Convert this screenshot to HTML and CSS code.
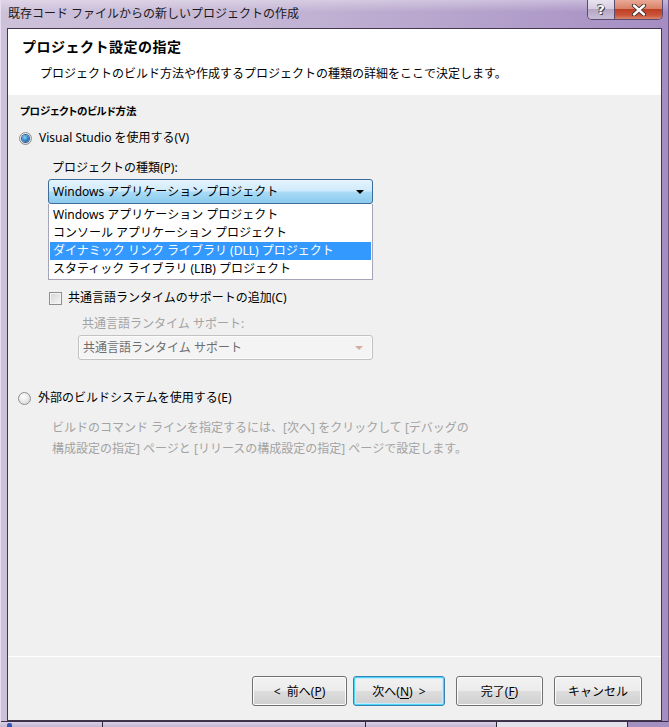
FILE: index.html
```html
<!DOCTYPE html>
<html lang="ja">
<head>
<meta charset="utf-8">
<title>既存コード ファイルからの新しいプロジェクトの作成</title>
<link rel="stylesheet" href="styles.css">
</head>
<body>
<div class="window">
  <div class="titlebar">
    <span class="title-text">既存コード ファイルからの新しいプロジェクトの作成</span>
    <div class="caption-btns">
      <span class="cap-btn cap-help">?</span>
      <span class="cap-btn cap-close">
        <svg width="16" height="12" viewBox="0 0 16 12"><path d="M3 1.5 L13 10.5 M13 1.5 L3 10.5" stroke="#3a2a2a" stroke-width="4.2" stroke-linecap="round"/><path d="M3 1.5 L13 10.5 M13 1.5 L3 10.5" stroke="#ffffff" stroke-width="2.4" stroke-linecap="round"/></svg>
      </span>
    </div>
  </div>

  <div class="client">
    <div class="header">
      <div class="header-title">プロジェクト設定の指定</div>
      <div class="header-sub">プロジェクトのビルド方法や作成するプロジェクトの種類の詳細をここで決定します。</div>
    </div>

    <div class="content">
      <div class="section-title">プロジェクトのビルド方法</div>

      <label class="radio-row first-radio">
        <span class="radio checked"><span class="dot"></span></span>
        <span>Visual Studio を使用する(V)</span>
      </label>

      <div class="indent">
        <div class="field-label">プロジェクトの種類(P):</div>
        <div class="combo-wrap">
          <div class="combo active">
            <span>Windows アプリケーション プロジェクト</span>
            <span class="arrow dark"></span>
          </div>
          <ul class="dropdown">
            <li>Windows アプリケーション プロジェクト</li>
            <li>コンソール アプリケーション プロジェクト</li>
            <li class="selected">ダイナミック リンク ライブラリ (DLL) プロジェクト</li>
            <li>スタティック ライブラリ (LIB) プロジェクト</li>
          </ul>
        </div>

        <label class="check-row">
          <span class="checkbox"></span>
          <span>共通言語ランタイムのサポートの追加(C)</span>
        </label>

        <div class="sub-indent">
          <div class="field-label disabled">共通言語ランタイム サポート:</div>
          <div class="combo off">
            <span>共通言語ランタイム サポート</span>
            <span class="arrow pale"></span>
          </div>
        </div>
      </div>

      <label class="radio-row second-radio">
        <span class="radio"></span>
        <span>外部のビルドシステムを使用する(E)</span>
      </label>

      <p class="desc">ビルドのコマンド ラインを指定するには、[次へ] をクリックして [デバッグの<br>構成設定の指定] ページと [リリースの構成設定の指定] ページで設定します。</p>
    </div>

    <div class="footer">
      <button class="btn w-back">&lt;&nbsp; 前へ(<u>P</u>)</button>
      <button class="btn w-next focused">次へ(<u>N</u>)&nbsp; &gt;</button>
      <button class="btn w-finish">完了(<u>F</u>)</button>
      <button class="btn w-cancel">キャンセル</button>
    </div>
  </div>
</div>
<div class="taskbar">
  <span class="task t1"><span class="task-icon"></span></span>
  <span class="task t2"></span>
  <span class="task t3"></span>
  <span class="task t4"></span>
  <span class="task t5"></span>
</div>
</body>
</html>
```
FILE: styles.css
```css
* { box-sizing: border-box; }

html, body {
  margin: 0;
  padding: 0;
  width: 669px;
  height: 727px;
  overflow: hidden;
  background: #c9bfd6;
  font-family: "Noto Sans", "Noto Sans CJK JP", sans-serif;
  font-size: 12px;
  color: #000;
}

/* window frame */
.window {
  height: 722px;
  display: flex;
  flex-direction: column;
  padding: 0 7px 1px 6px;
  background:
    linear-gradient(180deg, rgba(255,255,255,0.35) 0, rgba(255,255,255,0) 12px),
    linear-gradient(90deg, #cdc1da 0%, #c6b8d6 35%, #b6a3cc 70%, #a58dc3 100%);
  border-left: 1px solid #e6def0;
  box-shadow: inset -1px 0 0 #6b5886, inset 0 -1px 0 #3b2f48;
}

.titlebar {
  height: 28px;
  display: flex;
  align-items: flex-start;
  flex: none;
}

.title-text {
  margin-top: 6px;
  margin-left: 1px;
  line-height: 16px;
  color: #1a1a1a;
}

.caption-btns {
  margin-left: auto;
  display: flex;
  height: 20px;
  border: 1px solid #5c4b70;
  border-top: none;
  border-radius: 0 0 5px 5px;
  overflow: hidden;
  margin-right: -1px;
}

.cap-btn {
  height: 19px;
  display: flex;
  align-items: center;
  justify-content: center;
}

.cap-help {
  width: 27px;
  font-family: "DejaVu Sans", sans-serif;
  font-weight: bold;
  font-size: 13px;
  color: #fff;
  text-shadow: 0 0 1px #333, 1px 1px 0 #444, -1px -1px 0 #666;
  background: linear-gradient(180deg, #e9e3ef 0%, #d6cde0 45%, #b4a6c4 50%, #c9bed6 100%);
  border-right: 1px solid #5c4b70;
}

.cap-close {
  width: 47px;
  background: linear-gradient(180deg, #e9a996 0%, #d98269 45%, #bf3f22 50%, #c9553a 80%, #d9866c 100%);
}

/* client area */
.client {
  flex: 1;
  display: flex;
  flex-direction: column;
  background: #f0f0f0;
  border: 1px solid #42364f;
}

.header {
  height: 66px;
  background: #fff;
  padding: 9px 0 0 14px;
  flex: none;
}

.header-title {
  font-weight: bold;
  font-size: 14px;
  line-height: 18px;
  letter-spacing: 0.5px;
}

.header-sub {
  margin-top: 10px;
  margin-left: 18px;
  line-height: 16px;
}

.content {
  padding: 8px 0 0 12px;
  line-height: 16px;
}

.section-title {
  font-weight: bold;
  font-size: 10.5px;
  font-feature-settings: "palt";
  letter-spacing: -0.2px;
  height: 16px;
}

.radio-row,
.check-row {
  display: flex;
  align-items: center;
  gap: 7px;
  height: 16px;
}

.first-radio { margin-top: 11px; margin-left: -1px; }
.second-radio { margin-top: 30px; margin-left: -2px; }

.radio {
  width: 13px;
  height: 13px;
  border-radius: 50%;
  border: 1px solid #8e8f8f;
  background: radial-gradient(circle at 40% 35%, #ffffff 0%, #e6e6e6 55%, #cfcfcf 100%);
  display: flex;
  align-items: center;
  justify-content: center;
  flex: none;
}

.radio .dot {
  width: 7px;
  height: 7px;
  border-radius: 50%;
  background: radial-gradient(circle at 40% 35%, #8ed0f6 0%, #2c7fc7 55%, #0f4d8f 100%);
  box-shadow: 0 0 0 1px #36618f;
}

.indent { padding-left: 28px; }

.field-label {
  margin-top: 14px;
  height: 16px;
  margin-left: 4px;
}

.field-label.disabled {
  color: #a3a3a3;
  margin-top: 10px;
}

.combo-wrap { position: relative; }

.combo {
  width: 325px;
  height: 25px;
  margin-top: 3px;
  border-radius: 3px;
  display: flex;
  align-items: center;
  padding: 0 8px 0 4px;
}

.combo.active {
  border: 1px solid #3c6d98;
  background: linear-gradient(180deg, #e5f4fc 0%, #cfeafb 48%, #a9dbf6 52%, #8ccaee 100%);
}

.combo.off {
  width: 295px;
  margin-top: 3px;
  border: 1px solid #c2c2c2;
  background: #f4f4f4;
  color: #6d6d6d;
  box-shadow: inset 0 0 0 1px #fbfbfb;
}

.arrow {
  margin-left: auto;
  width: 0;
  height: 0;
  border-left: 4px solid transparent;
  border-right: 4px solid transparent;
  border-top: 4px solid #000;
}

.arrow.pale { border-top-color: #d3aea4; margin-right: 1px; }

/* open list of the project-type combo */
.dropdown {
  position: absolute;
  top: 100%;
  left: 0;
  width: 325px;
  margin: 0;
  padding: 2px 1px 1px;
  list-style: none;
  background: #fff;
  border: 1px solid #a5a3b5;
  border-top: none;
  z-index: 2;
}

.dropdown li {
  height: 18px;
  line-height: 18px;
  padding-left: 3px;
  white-space: nowrap;
}

.dropdown li.selected {
  background: #3399ff;
  color: #fff;
}

.check-row {
  margin-top: 86px;
  margin-left: 1px;
  gap: 6px;
}

.checkbox {
  width: 13px;
  height: 13px;
  border: 1px solid #8e8f8f;
  background: linear-gradient(135deg, #d5d5d5 0%, #e6e6e6 50%, #f6f6f6 100%);
  box-shadow: inset 0 0 0 1px #f4f4f4;
  flex: none;
}

.sub-indent { padding-left: 30px; }

.desc {
  margin: 11px 0 0 32px;
  line-height: 21px;
  color: #a3a3a3;
}

/* wizard buttons */
.footer {
  margin-top: auto;
  border-top: 1px solid #ffffff;
  display: flex;
  justify-content: flex-end;
  align-items: center;
  padding: 19px 19px 14px 0;
  gap: 11px;
}

.btn {
  height: 30px;
  border: 1px solid #707070;
  border-radius: 3px;
  background: linear-gradient(180deg, #f2f2f2 0%, #ebebeb 49%, #dddddd 51%, #cfcfcf 100%);
  box-shadow: inset 0 0 0 1px #fcfcfc;
  font-family: inherit;
  font-size: 12px;
  color: #000;
  padding: 0;
}

.btn u { text-underline-offset: 2px; }

.w-back { width: 95px; margin-right: -5px; }
.w-next { width: 92px; }
.w-finish { width: 87px; }
.w-cancel { width: 88px; }

.btn.focused {
  border-color: #3c7fb1;
  box-shadow: inset 0 0 0 1px #48d8fb, inset 0 0 0 2px #c4ecfc;
}

/* strip of other windows below */
.taskbar {
  height: 5px;
  display: flex;
  background: #2e2634;
  gap: 1px;
}

.task {
  height: 5px;
  background: linear-gradient(180deg, #d9d1e4, #c2b6d2);
  position: relative;
}

.t1 { width: 102px; }
.t2 { width: 262px; }
.t3 { width: 130px; }
.t4 { width: 130px; background: #e4e0ec; }
.t5 { flex: 1; background: #a590c2; }

.task-icon {
  position: absolute;
  left: 7px;
  top: 1px;
  width: 5px;
  height: 4px;
  border-radius: 2px 2px 0 0;
  background: #2f56b8;
}
```
